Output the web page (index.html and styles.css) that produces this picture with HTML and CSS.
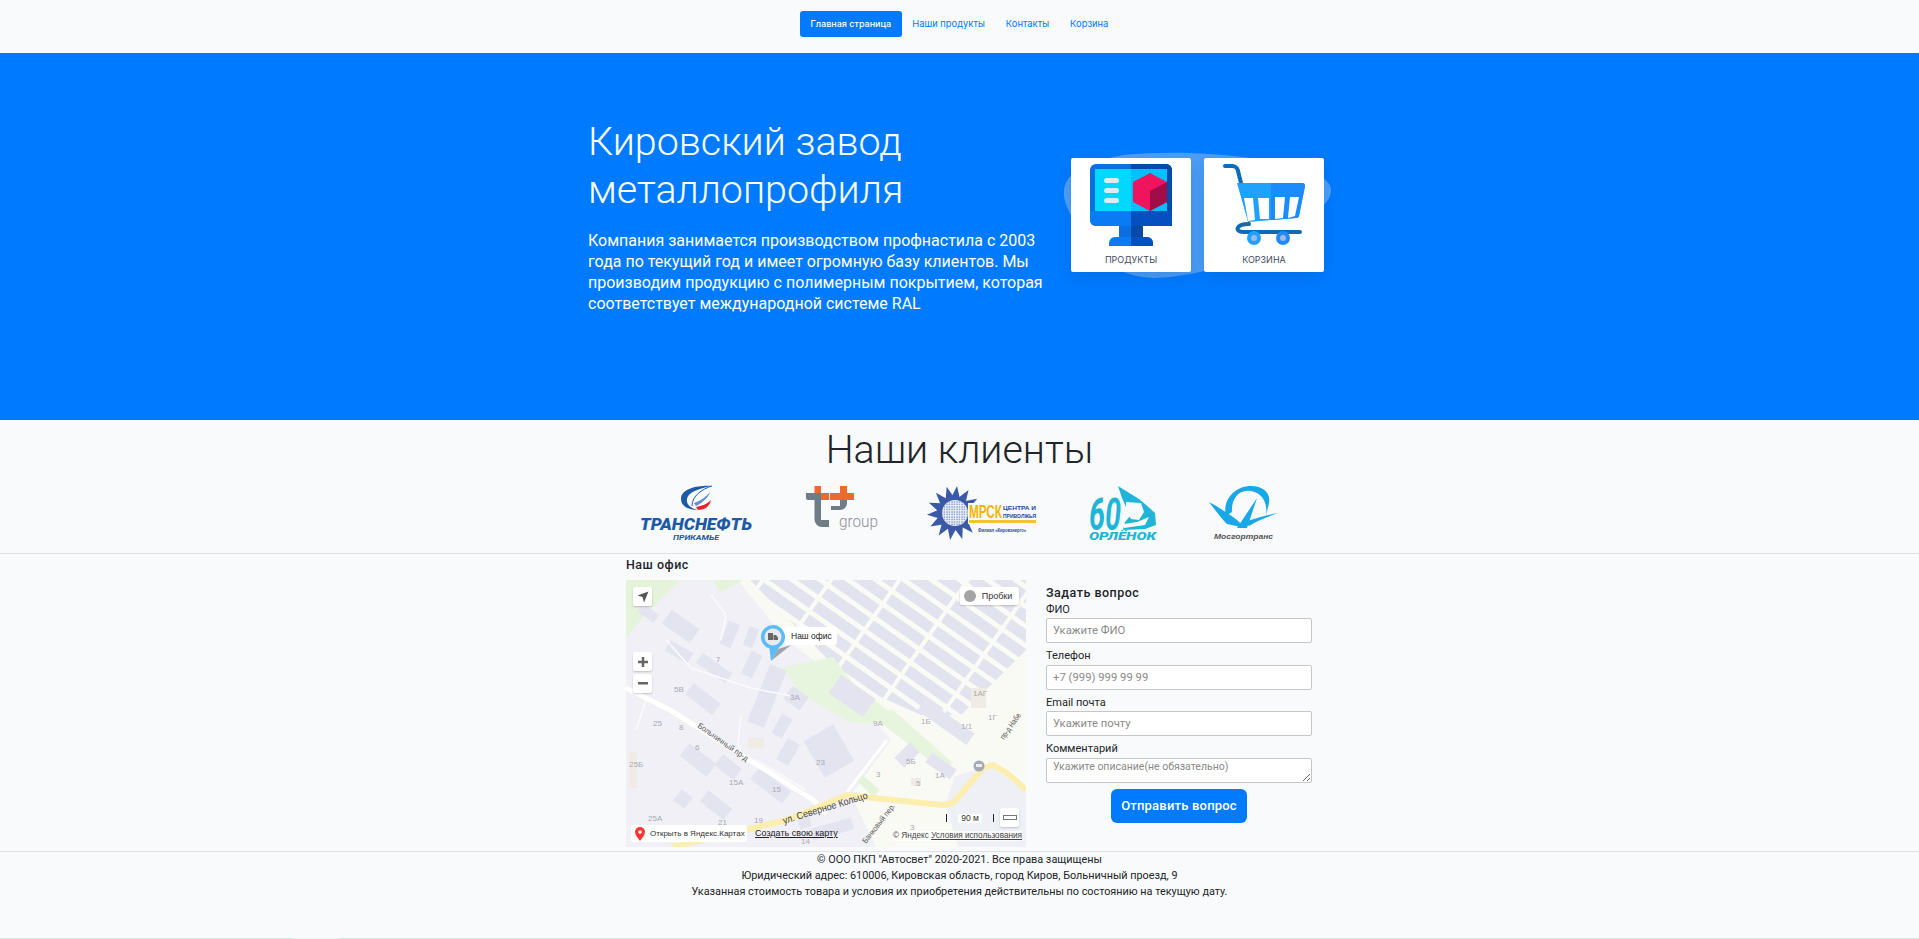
FILE: index.html
```html
<!DOCTYPE html>
<html lang="ru">
<head>
<meta charset="utf-8">
<title>Кировский завод металлопрофиля</title>
<link rel="stylesheet" href="styles.css">
</head>
<body>
<nav class="nav">
  <a class="pill active">Главная страница</a>
  <a class="pill">Наши продукты</a>
  <a class="pill">Контакты</a>
  <a class="pill">Корзина</a>
</nav>
<section class="hero">
  <div class="hero-text">
    <h1>Кировский завод металлопрофиля</h1>
    <p>Компания занимается производством профнастила с 2003 года по текущий год и имеет огромную базу клиентов. Мы производим продукцию с полимерным покрытием, которая соответствует международной системе RAL</p>
  </div>
  <div class="hero-cards">
    <svg class="blob" viewBox="0 0 267 126"><path d="M0 38C2 18 30 8 60 3c40-4 90-3 140 5 40 6 67 16 67 30 0 18-27 24-27 37-40 25-90 49-150 51-40-1-70-26-80-56C3 55-1 48 0 38z" fill="#4d9ff7"/></svg>
    <a class="card">
      <svg class="card-icon" viewBox="0 0 82 82" width="82" height="82">
        <rect x="0" y="0" width="82" height="62" rx="6" fill="#0a6fe0"/>
        <path d="M41 0h35a6 6 0 0 1 6 6v56H41z" fill="#054aa8"/>
        <rect x="5" y="5" width="72" height="42" fill="#00d8ff"/>
        <rect x="41" y="5" width="36" height="42" fill="#00c0ff"/>
        <path d="M0 47h82v9a6 6 0 0 1-6 6H6a6 6 0 0 1-6-6z" fill="#0a7bf5"/>
        <path d="M41 47h41v9a6 6 0 0 1-6 6H41z" fill="#0550c0"/>
        <rect x="29" y="62" width="24" height="11" fill="#0a6fe0"/>
        <rect x="41" y="62" width="12" height="11" fill="#054aa8"/>
        <path d="M25 73h32a6 6 0 0 1 6 6v3H19v-3a6 6 0 0 1 6-6z" fill="#0a7bf5"/>
        <path d="M41 73h16a6 6 0 0 1 6 6v3H41z" fill="#0550c0"/>
        <rect x="14" y="14" width="15" height="5" rx="2.5" fill="#dce9f7"/>
        <rect x="14" y="24" width="15" height="5" rx="2.5" fill="#dce9f7"/>
        <rect x="14" y="34" width="15" height="5" rx="2.5" fill="#dce9f7"/>
        <path d="M60 9l17 9v20l-17 9-17-9V18z" fill="#f0145f"/>
        <path d="M60 27l17-9v20l-17 9z" fill="#a00d48"/>
      </svg>
      <span>ПРОДУКТЫ</span>
    </a>
    <a class="card">
      <svg class="card-icon" viewBox="0 0 82 82" width="82" height="82">
        <path d="M2 2h7a6 6 0 0 1 6 5l4 16" fill="none" stroke="#0d6cb5" stroke-width="4" stroke-linecap="round"/>
        <path d="M14 19h65a3 3 0 0 1 3 3l-6 30a3 3 0 0 1-3 2l-48 4z" fill="#1fa2ff"/>
        <path d="M48 19h31a3 3 0 0 1 3 3l-6 30a3 3 0 0 1-3 2l-25 2z" fill="#1a8cff"/>
        <path d="M21 34h9l2 22-7 1zM35 34h11v21H37zM52 33h10l-2 21-8 1zM67 33h9l-4 19-7 2z" fill="#fff"/>
        <path d="M26 60c-14 0-14 8-6 8h57" fill="none" stroke="#0d6cb5" stroke-width="4" stroke-linecap="round"/>
        <circle cx="31" cy="74" r="7" fill="#1fa2ff"/><circle cx="31" cy="74" r="3" fill="#9db7ef"/>
        <circle cx="60" cy="74" r="7" fill="#1a8cff"/><circle cx="60" cy="74" r="3" fill="#9db7ef"/>
      </svg>
      <span>КОРЗИНА</span>
    </a>
  </div>
</section>
<section class="clients">
  <h2>Наши клиенты</h2>
  <div class="logos">
    <svg class="logo" viewBox="0 0 112 54" width="112" height="54">
      <path d="M72 0C60-1 41 2 41 13c0 7 7 11 17 11-8-2-12-6-11-11C48 6 60 2 72 0z" fill="#1d5aa6"/>
      <path d="M52 20C52 10 62 3 72 0" fill="none" stroke="#1d5aa6"/>
      <path d="M54 17c6-2 12-6 16-11-1 4-6 10-14 14z" fill="#5f8fd0"/>
      <path d="M56 21c6-1 11-3 15-7-1 5-5 10-13 10z" fill="#e8212e"/>
      <text class="tn-name" x="0" y="44" textLength="112" lengthAdjust="spacingAndGlyphs">ТРАНСНЕФТЬ</text>
      <text class="tn-sub" x="33" y="54" textLength="46" lengthAdjust="spacingAndGlyphs">ПРИКАМЬЕ</text>
    </svg>
    <svg class="logo" viewBox="0 0 73 54" width="73" height="54">
      <path d="M1 7h15v7H3a2 2 0 0 1-2-2z" fill="#6f7b85"/>
      <path d="M9.500 14H16v20h8v7h-7a7.500 7.500 0 0 1-7.500-7.500z" fill="#6f7b85"/>
      <path d="M9.500 0H16v7h8v7H16V7H9.500z" fill="#ee6a2c"/>
      <path d="M35 0h7v7h7v7H25V7h10z" fill="#ee6a2c"/>
      <path d="M35 14h7v3a7 7 0 0 1-7 7h-9v-4h9z" fill="#6f7b85"/>
      <text class="t-group" x="34" y="41" textLength="39" lengthAdjust="spacingAndGlyphs">group</text>
    </svg>
    <svg class="logo" viewBox="0 0 105 54" width="105" height="54">
      <defs>
        <path id="ray" d="M26 0l3 13-10 1z" fill="#3a5aa8"/>
        <pattern id="dots" width="2.500" height="2.500" patternUnits="userSpaceOnUse"><circle cx="1" cy="1" r=".7" fill="#6d86bd"/></pattern>
      </defs>
      <use href="#ray"/><use href="#ray" transform="rotate(26 23 27)"/><use href="#ray" transform="rotate(52 23 27)"/><use href="#ray" transform="rotate(78 23 27)"/><use href="#ray" transform="rotate(104 23 27)"/><use href="#ray" transform="rotate(130 23 27)"/><use href="#ray" transform="rotate(156 23 27)"/><use href="#ray" transform="rotate(182 23 27)"/><use href="#ray" transform="rotate(208 23 27)"/><use href="#ray" transform="rotate(234 23 27)"/><use href="#ray" transform="rotate(260 23 27)"/><use href="#ray" transform="rotate(286 23 27)"/><use href="#ray" transform="rotate(312 23 27)"/><use href="#ray" transform="rotate(338 23 27)"/>
      <circle cx="23" cy="27" r="15" fill="#3a5aa8"/>
      <circle cx="24" cy="27" r="13" fill="#e9eef7"/>
      <circle cx="24" cy="27" r="13" fill="url(#dots)"/>
      <rect x="37" y="17" width="68" height="21" fill="#f9fafc"/>
      <text class="mrsk-big" x="38" y="32" textLength="33" lengthAdjust="spacingAndGlyphs">МРСК</text>
      <text class="mrsk-side" x="72" y="24" textLength="33" lengthAdjust="spacingAndGlyphs">ЦЕНТРА И</text>
      <text class="mrsk-side" x="72" y="32" textLength="33" lengthAdjust="spacingAndGlyphs">ПРИВОЛЖЬЯ</text>
      <rect x="38" y="34" width="67" height="3" fill="#f4c430"/>
      <text class="mrsk-sub" x="47" y="46" textLength="48" lengthAdjust="spacingAndGlyphs">Филиал «Кировэнерго»</text>
    </svg>
    <svg class="logo" viewBox="0 0 67 54" width="67" height="54">
      <text class="orl-60" x="0" y="44" textLength="32" lengthAdjust="spacingAndGlyphs">60</text>
      <path d="M29 0l21 13 6 5 10 9 1 12-11 4-22 1 2-8 5-6-8-18z" fill="#20b5d8"/>
      <path d="M37 16l15 1 3 9-5 8-8-1-5-7z" fill="#f9fafc"/>
      <path d="M35 38l13-2 12-5-4 8-21 3z" fill="#f9fafc"/>
      <text class="orl-name" x="0" y="54" textLength="67" lengthAdjust="spacingAndGlyphs">ОРЛЁНОК</text>
    </svg>
    <svg class="logo" viewBox="0 0 69 54" width="69" height="54">
      <path d="M17 30C13 14 26 0 42 0c12 0 20 7 18 17l-3 13c2-12-3-23-15-25-13-2-20 9-19 21z" fill="#18a8e8"/>
      <path d="M0 16c8 4 20 12 28 18l8 8-18-4C12 32 6 24 0 16z" fill="#18a8e8"/>
      <path d="M48 12L38 42H28z" fill="#18a8e8"/>
      <path d="M36 36c10-4 22-7 33-9-11 4-21 8-29 13z" fill="#18a8e8"/>
      <text class="mos-name" x="5" y="53" textLength="59" lengthAdjust="spacingAndGlyphs">Мосгортранс</text>
    </svg>
  </div>
</section>
<section class="office">
  <div class="office-map">
    <h3>Наш офис</h3>
    <div class="map">
      <svg class="map-art" viewBox="0 0 400 267" width="400" height="267">
        <defs>
          <pattern id="blocks" width="56" height="16" patternUnits="userSpaceOnUse" patternTransform="rotate(35)">
            <rect width="56" height="16" fill="#fbfbf6"/>
            <rect x="2" y="3" width="52" height="11" fill="#e2e3ee"/>
          </pattern>
        </defs>
        <rect width="400" height="267" fill="#f0f0f6"/>
        <path d="M112 0H400V267H250L225 215 265 160 215 100 160 60z" fill="#fafaf4"/>
        <path d="M328 197l40-14 32 25v59h-68l-12-42z" fill="#efeff6"/>
        <path d="M124 0H400V70L335 135 295 135 226 104z" fill="url(#blocks)"/>
        <path d="M0 0h54L37 17 17 37 0 58z" fill="#e4f3da"/>
        <path d="M87 0h30L94 12z" fill="#e4f3da"/>
        <path d="M157 87l50-10 20 26 34 27 6 0 60 53-12 6-60-46-31 0-50-30z" fill="#e8f5de"/>
        <path d="M234 193l20 17-7 7-16-16z" fill="#e4f3da"/>
        <g fill="#e3e4ef">
          <rect x="38" y="38" width="34" height="17" transform="rotate(35 55 46)"/>
          <rect x="12" y="28" width="20" height="10" transform="rotate(35 22 33)"/>
          <rect x="98" y="42" width="12" height="25" transform="rotate(22 104 54)"/>
          <rect x="120" y="47" width="10" height="20" transform="rotate(20 125 57)"/>
          <rect x="40" y="66" width="26" height="12" transform="rotate(30 53 72)"/>
          <rect x="70" y="82" width="36" height="12" transform="rotate(35 88 88)"/>
          <rect x="120" y="72" width="12" height="25" transform="rotate(25 126 84)"/>
          <rect x="132" y="85" width="18" height="62" transform="rotate(22 141 116)"/>
          <rect x="60" y="112" width="34" height="14" transform="rotate(38 77 119)"/>
          <rect x="186" y="150" width="34" height="42" transform="rotate(-30 203 171)"/>
          <rect x="205" y="105" width="42" height="22" transform="rotate(35 226 116)"/>
          <rect x="160" y="110" width="20" height="16" transform="rotate(35 170 118)"/>
          <rect x="155" y="160" width="14" height="24" transform="rotate(30 162 172)"/>
          <rect x="55" y="172" width="34" height="16" transform="rotate(38 72 180)"/>
          <rect x="90" y="180" width="24" height="14" transform="rotate(38 102 187)"/>
          <rect x="125" y="198" width="40" height="15" transform="rotate(38 145 205)"/>
          <rect x="150" y="135" width="12" height="22" transform="rotate(30 156 146)"/>
          <rect x="50" y="212" width="14" height="14" transform="rotate(38 57 219)"/>
          <rect x="75" y="218" width="30" height="14" transform="rotate(38 90 225)"/>
          <rect x="185" y="243" width="42" height="12" transform="rotate(-15 206 249)"/>
          <rect x="172" y="232" width="12" height="16" transform="rotate(-15 178 240)"/>
          <rect x="270" y="168" width="22" height="14" transform="rotate(-45 281 175)"/>
          <rect x="290" y="135" width="60" height="14" transform="rotate(35 320 142)"/>
          <rect x="300" y="180" width="30" height="12" transform="rotate(35 315 186)"/>
        </g>
        <g fill="#eeece4">
          <rect x="3" y="172" width="8" height="36"/>
          <rect x="122" y="158" width="16" height="10"/>
          <rect x="285" y="198" width="10" height="8"/>
          <rect x="345" y="108" width="15" height="20"/>
        </g>
        <path d="M0 108L44 130 187 220 200 234" stroke="#fff" stroke-width="5" fill="none"/>
        <path d="M261 160L221 212" stroke="#fff" stroke-width="3" fill="none"/>
        <path d="M115 135L112 165 120 180M40 60l25 28 60 20 40 8M85 15l15 20-5 25M20 120L10 150M130 180l50 30M300 240l-25 27" stroke="#fbfbfd" stroke-width="1.500" fill="none"/>
        <path d="M46 267L161 240 221 215 247 218 317 225 327 223 357 188 367 185 381 193 400 210" fill="none" stroke="#fbeeae" stroke-width="6"/>
        <g class="map-num">
          <text x="90" y="82">7</text><text x="48" y="112">5В</text><text x="164" y="120">3А</text><text x="347" y="116">1АГ</text>
          <text x="27" y="146">25</text><text x="53" y="150">8</text><text x="247" y="146">9А</text><text x="295" y="144">1Б</text><text x="335" y="149">1/1</text><text x="362" y="140">1Г</text>
          <text x="69" y="170">6</text><text x="190" y="185">23</text><text x="280" y="184">5Б</text><text x="309" y="198">1А</text><text x="3" y="187">25Б</text><text x="103" y="205">15А</text><text x="146" y="212">15</text>
          <text x="250" y="197">3</text><text x="290" y="206">5</text><text x="22" y="241">25А</text><text x="92" y="245">21</text><text x="128" y="243">19</text><text x="284" y="250">3</text><text x="175" y="264">14</text>
        </g>
        <text class="map-road" transform="translate(71 147) rotate(35)" textLength="60" lengthAdjust="spacingAndGlyphs">Больничный пр-д</text>
        <text class="map-road big" transform="translate(158 244) rotate(-17)" textLength="88" lengthAdjust="spacingAndGlyphs">ул. Северное Кольцо</text>
        <text class="map-road" transform="translate(378 160) rotate(-55)" textLength="30" lengthAdjust="spacingAndGlyphs">пр-д Набе</text>
        <text class="map-road" transform="translate(240 264) rotate(-52)" textLength="48" lengthAdjust="spacingAndGlyphs">Банковый пер.</text>
        <circle cx="353" cy="186" r="5.500" fill="#a6a9b8"/><rect x="350" y="184" width="6" height="3" fill="#eee"/>
      </svg>
      <button class="map-btn map-loc" type="button"><svg viewBox="0 0 12 12" width="12" height="12"><path d="M11.500.5L.5 4.500l5 1.500 1.500 5.500z" fill="#555"/></svg></button>
      <button class="map-btn map-traffic" type="button"><i class="traffic-dot"></i>Пробки</button>
      <button class="map-btn map-plus" type="button"><svg viewBox="0 0 10 10" width="10" height="10"><path d="M0 3.750h3.750V0h2.500v3.750H10v2.500H6.250V10h-2.500V6.250H0z" fill="#666"/></svg></button>
      <button class="map-btn map-minus" type="button"><svg viewBox="0 0 10 3" width="10" height="3"><rect width="10" height="2.500" fill="#666"/></svg></button>
      <div class="map-pin">
        <svg viewBox="0 0 34 40" width="34" height="40"><path d="M10 36L30 20 17 24z" fill="#77797c" opacity=".65"/><path d="M12 0a12 12 0 0 1 6 22.400L10 36l-1.500-12.500A12 12 0 0 1 12 0z" fill="#5cbcf7"/><circle cx="12" cy="12" r="8.500" fill="#e9eaf0"/><path d="M7 8h5v7H7zM12.500 10h2.500l2 2.500V15h-4.500z" fill="#666"/></svg>
        <span class="pin-label">Наш офис</span>
      </div>
      <div class="map-open"><svg viewBox="0 0 10 14" width="10" height="14"><path d="M5 0a5 5 0 0 1 5 5c0 3-3 6-5 9-2-3-5-6-5-9a5 5 0 0 1 5-5z" fill="#f33"/><circle cx="5" cy="5" r="1.800" fill="#fff"/></svg>Открыть в Яндекс.Картах</div>
      <span class="map-create">Создать свою карту</span>
      <span class="map-terms">© Яндекс <u>Условия использования</u></span>
      <div class="map-scale"><span>90 м</span></div>
      <button class="map-btn map-ruler" type="button"><i></i></button>
    </div>
  </div>
  <form class="ask">
    <h4>Задать вопрос</h4>
    <label>ФИО</label>
    <input type="text" placeholder="Укажите ФИО">
    <label>Телефон</label>
    <input type="text" placeholder="+7 (999) 999 99 99">
    <label>Email почта</label>
    <input type="text" placeholder="Укажите почту">
    <label>Комментарий</label>
    <textarea placeholder="Укажите описание(не обязательно)"></textarea>
    <button class="send" type="button">Отправить вопрос</button>
  </form>
</section>
<footer class="footer">
  <p>© ООО ПКП "Автосвет" 2020-2021. Все права защищены</p>
  <p>Юридический адрес: 610006, Кировская область, город Киров, Больничный проезд, 9</p>
  <p>Указанная стоимость товара и условия их приобретения действительны по состоянию на текущую дату.</p>
</footer>
<div class="strip"><i class="strip-a"></i><i class="strip-gap"></i><i class="strip-b"></i></div>
</body>
</html>
```
FILE: styles.css
```css
* { box-sizing: border-box; }
html, body { margin: 0; height: 100%; }
body {
  background: #f9fafc;
  color: #212529;
  font-family: Roboto, "Liberation Sans", sans-serif;
  font-size: 12px;
  overflow: hidden;
}
.nav {
  height: 53px;
  display: flex;
  justify-content: center;
  align-items: center;
  padding-bottom: 5px;
  font-family: Inter, Roboto, sans-serif;
}
.pill {
  font-size: 9.400px;
  line-height: 14px;
  padding: 6px 10.500px;
  color: #007bff;
  border-radius: 3px;
}
.active { background: #007bff; color: #fff; font-size: 9px; font-weight: 500; }
.hero {
  height: 367px;
  background: #007bff;
  display: flex;
  color: #fff;
  padding-left: 588px;
}
.hero-text { width: 460px; padding-top: 64.500px; }
.hero-text h1 {
  margin: 0;
  font-weight: 300;
  font-size: 39.400px;
  line-height: 48px;
}
.hero-text p {
  margin: 16px 0 0;
  font-size: 16px;
  line-height: 21px;
}
.hero-cards {
  position: relative;
  display: flex;
  gap: 13px;
  margin-left: 23px;
  margin-top: 105px;
  height: 114px;
}
.blob { position: absolute; left: -7px; top: -6px; width: 267px; height: 126px; }
.card {
  position: relative;
  width: 120px;
  height: 114px;
  background: #fff;
  border-radius: 2px;
  box-shadow: 0 6px 16px rgba(0, 60, 140, .18);
  display: flex;
  flex-direction: column;
  align-items: center;
  padding-top: 6px;
  color: #3f4a5a;
}
.card-icon { display: block; }
.card span {
  font-family: Inter, Roboto, sans-serif;
  font-size: 9px;
  line-height: 12px;
  margin-top: 8px;
}
.clients { height: 134px; border-bottom: 1px solid #dee2e6; }
.clients h2 {
  margin: 0;
  text-align: center;
  font-weight: 300;
  font-size: 39.400px;
  line-height: 48px;
  padding-top: 6px;
  height: 66px;
}
.logos {
  display: flex;
  justify-content: center;
  gap: 53px;
  padding-right: 1px;
}
.logo { display: block; flex: none; overflow: visible; }
.tn-name { font: italic 900 17px Roboto, sans-serif; fill: #1d5aa6; }
.tn-sub { font: italic 700 7px Roboto, sans-serif; fill: #1d5aa6; }
.t-group { font: 300 17px Roboto, sans-serif; fill: #8a9198; }
.mrsk-big { font: 700 18px "Liberation Sans", sans-serif; fill: #f4b400; }
.mrsk-side { font: 700 6px "Liberation Sans", sans-serif; fill: #24479c; }
.mrsk-sub { font: 700 4.500px "Liberation Sans", sans-serif; fill: #24479c; }
.orl-60 { font: italic 700 44px Roboto, sans-serif; fill: #20b5d8; }
.orl-name { font: italic 900 10px Roboto, sans-serif; fill: #20b5d8; }
.mos-name { font: italic 700 8px "Liberation Sans", sans-serif; fill: #555; }
.office {
  height: 298px;
  display: flex;
  padding-left: 626px;
  border-bottom: 1px solid #dee2e6;
}
.office-map { width: 400px; }
.office-map h3 {
  margin: 0;
  font-size: 12.500px;
  line-height: 15px;
  font-weight: 500;
  padding-top: 3px;
  height: 26px;
  letter-spacing: .5px;
}
.map {
  position: relative;
  width: 400px;
  height: 267px;
  overflow: hidden;
  font-family: "Liberation Sans", sans-serif;
}
.map-art { display: block; }
.map-num { font: 8px "Liberation Sans", sans-serif; fill: #a9a9b2; }
.map-road { font: 8px "Liberation Sans", sans-serif; fill: #555; }
.map-road.big { font-size: 10px; fill: #444; }
.map-btn {
  position: absolute;
  padding: 0;
  border: 0;
  border-radius: 2px;
  background: #fff;
  box-shadow: 0 1px 2px rgba(0, 0, 0, .2);
  font-family: inherit;
  color: #555;
  display: flex;
  align-items: center;
  justify-content: center;
}
.map-loc { left: 7px; top: 7px; width: 19px; height: 19px; }
.map-traffic { right: 7px; top: 7px; width: 59px; height: 18px; font-size: 9px; color: #333; gap: 6px; padding-right: 3px; }
.traffic-dot { width: 12px; height: 12px; border-radius: 50%; background: #a5a5a5; }
.map-plus { left: 7px; top: 72px; width: 19px; height: 19px; }
.map-minus { left: 7px; top: 94px; width: 19px; height: 19px; }
.map-pin { position: absolute; left: 135px; top: 45px; display: flex; }
.pin-label {
  position: absolute; left: 24px; top: 2px;
  height: 18px; line-height: 18px; padding: 0 5px 0 6px;
  background: #fff; border-radius: 3px; font-size: 8.500px; color: #222; white-space: nowrap;
}
.map-pin svg { position: relative; z-index: 1; }
.map-open {
  position: absolute; left: 5px; top: 245px; width: 116px; height: 17px;
  display: flex; align-items: center; gap: 5px; padding-left: 4px;
  background: #fff; border-radius: 2px; font-size: 8px; color: #333; white-space: nowrap;
}
.map-create {
  position: absolute; left: 129px; top: 248px;
  font-size: 9px; line-height: 10px; color: #222; text-decoration: underline; white-space: nowrap;
}
.map-terms {
  position: absolute; right: 4px; top: 251px;
  font-size: 8.200px; line-height: 10px; color: #444; background: rgba(255,255,255,.7); white-space: nowrap;
}
.map-scale {
  position: absolute; left: 320px; top: 234px; width: 48px; height: 8px;
  border-left: 1px solid #222; border-right: 1px solid #222; display: flex; justify-content: center;
}
.map-scale span { background: #fff; font-size: 8.500px; line-height: 9px; padding: 0 3px; color: #333; border-radius: 2px; height: 9px; white-space: nowrap; }
.map-ruler { right: 7px; top: 228px; width: 19px; height: 19px; }
.map-ruler i { width: 14px; height: 5px; border: 1px solid #777; display: block; }
.ask {
  width: 266px;
  margin-left: 20px;
  display: flex;
  flex-direction: column;
  padding-top: 30.500px;
}
.ask h4 {
  margin: 0 0 2px;
  font-size: 12.500px;
  line-height: 15px;
  font-weight: 500;
  letter-spacing: .5px;
}
.ask label { font-size: 11px; line-height: 15px; margin-bottom: 1.500px; }
.ask input, .ask textarea {
  display: block;
  flex: none;
  width: 266px;
  height: 25px;
  margin: 0 0 5.170px;
  padding: 0 6px;
  border: 1px solid #c6c6c6;
  border-radius: 2px;
  background: #fff;
  font: 11.300px Roboto, sans-serif;
  outline: 0;
}
.ask textarea { padding-top: 1px; margin-bottom: 6px; font-size: 10.500px; line-height: 13px; }
.ask input::placeholder, .ask textarea::placeholder { color: #8a8a8a; opacity: 1; }
.send {
  align-self: center;
  width: 136px;
  height: 34px;
  padding: 0;
  border: 0;
  border-radius: 6px;
  background: #007bff;
  color: #fff;
  font: 500 13px Roboto, sans-serif;
  letter-spacing: .2px;
  white-space: nowrap;
}
.footer { height: 86px; text-align: center; }
.footer p { margin: 0; font-size: 10.850px; line-height: 16px; }
.strip { display: flex; height: 1px; }
.strip-a { width: 293px; background: #cde7e4; }
.strip-gap { width: 47px; background: #eef0f3; }
.strip-b { flex: 1; background: #cde7e4; }
```
